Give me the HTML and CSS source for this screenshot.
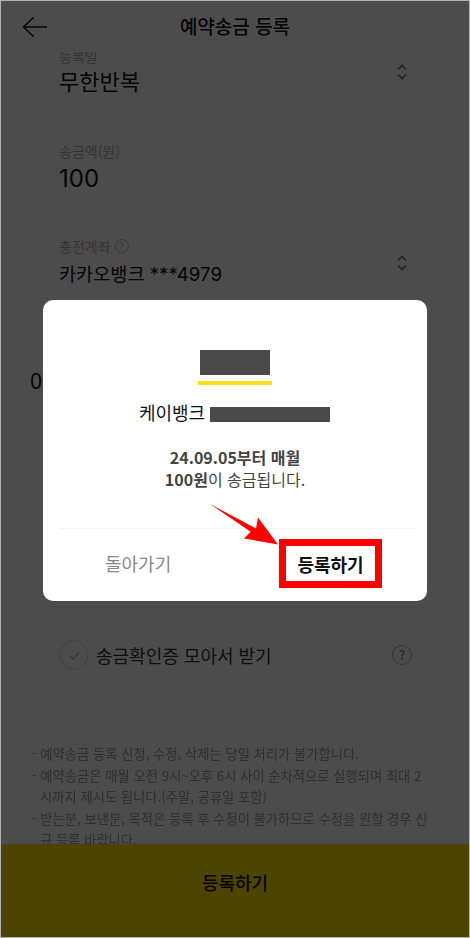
FILE: index.html
```html
<!DOCTYPE html>
<html lang="ko">
<head>
<meta charset="utf-8">
<title>예약송금 등록</title>
<link rel="stylesheet" href="styles.css">
</head>
<body>
<div class="screen">
  <header class="topbar">
    <svg class="back" viewBox="0 0 26 22" width="26" height="22"><path d="M25 11H1.5M11.5 1.5L1.5 11l10 9.5" fill="none" stroke="#111" stroke-width="1.5"/></svg>
    <h1 class="title">예약송금 등록</h1>
  </header>
  <main class="form">
    <section class="field first">
      <div class="field-text">
        <div class="label">등록일</div>
        <div class="value big">무한반복</div>
      </div>
      <svg class="updown" viewBox="0 0 10 16" width="10" height="16"><path d="M1 5.5L5 1.5l4 4M1 10.5l4 4 4-4" fill="none" stroke="#777" stroke-width="1.6"/></svg>
    </section>
    <section class="field amount">
      <div class="field-text">
        <div class="label">송금액(원)</div>
        <div class="value num">100</div>
      </div>
    </section>
    <section class="field account">
      <div class="field-text">
        <div class="label">충전계좌 <span class="hint">?</span></div>
        <div class="value mid">카카오뱅크 ***4979</div>
      </div>
      <svg class="updown" viewBox="0 0 10 16" width="10" height="16"><path d="M1 5.5L5 1.5l4 4M1 10.5l4 4 4-4" fill="none" stroke="#777" stroke-width="1.6"/></svg>
    </section>
    <div class="stray">0</div>
    <label class="check-row">
      <svg class="check" viewBox="0 0 30 30" width="30" height="30"><circle cx="15" cy="15" r="14" fill="none" stroke="#ddd" stroke-width="1.2"/><path d="M10 15.5l4 3.5 6-6.5" fill="none" stroke="#bbb" stroke-width="1.4"/></svg>
      <span class="check-text">송금확인증 모아서 받기</span>
      <span class="help">?</span>
    </label>
    <ul class="notes">
      <li>예약송금 등록 신청, 수정, 삭제는 당일 처리가 불가합니다.</li>
      <li>예약송금은 매월 오전 9시~오후 6시 사이 순차적으로 실행되며 최대 2<br>시까지 제시도 됩니다.(주말, 공휴일 포함)</li>
      <li>받는분, 보낸분, 목적은 등록 후 수정이 불가하므로 수정을 원할 경우 신<br>규 등록 바랍니다.</li>
    </ul>
  </main>
  <button class="submit" type="button">등록하기</button>

  <div class="dim"></div>

  <div class="modal">
    <div class="recipient"><span class="mask-name"></span></div>
    <div class="account-line">케이뱅크<span class="mask-account"></span></div>
    <p class="message"><strong>24.09.05부터 매월</strong><br><strong>100원</strong>이 송금됩니다.</p>
    <div class="actions">
      <button class="act cancel" type="button">돌아가기</button>
      <button class="act confirm" type="button">등록하기</button>
    </div>
    <svg class="pointer" viewBox="0 0 72 44" width="72" height="44"><polygon points="1,1 47,25.4 49,14.4 69,41.4 35,35.4 41.7,28.7" fill="#f00"/></svg>
  </div>
  <div class="frame"></div>
</div>
</body>
</html>
```
FILE: styles.css
```css
* { box-sizing: border-box; }
html, body { margin: 0; padding: 0; }
body { font-family: "Noto Sans CJK KR", "Noto Sans", sans-serif; }
.screen { position: relative; width: 470px; height: 938px; background: #fff; overflow: hidden; display: flex; flex-direction: column; color: #111; }
.topbar { height: 52px; flex: none; display: flex; align-items: center; justify-content: center; position: relative; background: #fff; z-index: 1; }
.back { position: absolute; left: 22px; top: 16px; }
.title { margin: 0; font-size: 19px; font-weight: 500; line-height: 54px; }
.form { flex: 1; min-height: 0; overflow: hidden; padding: 0 59px; position: relative; }
.field { display: flex; justify-content: space-between; align-items: flex-start; padding-right: 4px; }
.first { margin-top: -6px; }
.first .updown { margin-top: 18px; }
.amount { margin-top: 45px; }
.account { margin-top: 41px; }
.account .updown { margin-top: 19px; }
.label { font-size: 14px; line-height: 20px; color: #b0b0b0; display: flex; align-items: center; gap: 4px; }
.hint { width: 14px; height: 14px; border: 1px solid #bbb; border-radius: 50%; font-size: 10px; line-height: 12px; text-align: center; }
.value { color: #111; }
.big { font-size: 22px; line-height: 32px; margin-top: -2px; }
.num { font-size: 24px; line-height: 32px; font-family: "Inter", "Noto Sans", sans-serif; margin-top: 2px; }
.mid { font-size: 18.6px; line-height: 28px; margin-top: 4px; font-family: "Inter", "Noto Sans CJK KR", sans-serif; }
.stray { margin: 76px 0 0 -29px; font-size: 22px; line-height: 30px; height: 30px; color: #111; }
.check-row { display: flex; align-items: center; margin-top: 246px; }
.check { flex: none; }
.check-text { font-size: 18px; margin-left: 7px; color: #333; line-height: 30px; flex: 1; }
.help { width: 20px; height: 20px; margin-right: -1px; border: 1.5px solid #aaa; border-radius: 50%; color: #999; font-size: 13px; font-weight: 700; line-height: 17px; text-align: center; }
.notes { list-style: none; margin: 73px -27px 0; padding: 0; font-size: 13.3px; line-height: 21.6px; color: #a0a0a0; filter: blur(.5px); white-space: nowrap; }
.notes li { padding-left: 8px; text-indent: -8px; }
.notes li::before { content: "- "; }
.submit { flex: none; height: 94px; width: 100%; border: 0; background: #fee500; color: #111; font: 500 18px/1 "Noto Sans CJK KR", sans-serif; padding: 0 0 18px; }
.dim { position: absolute; inset: 0; background: rgba(0, 0, 0, .7); z-index: 2; }
.modal { position: absolute; left: 43px; top: 300px; width: 384px; height: 301px; background: #fff; border-radius: 10px; z-index: 3; display: flex; flex-direction: column; align-items: center; }
.recipient { margin-top: 50px; width: 74px; height: 35px; border-bottom: 4px solid #fde116; display: flex; justify-content: center; }
.mask-name { width: 70px; height: 25px; background: #4a4a4a; }
.account-line { margin-top: 14px; height: 26px; display: flex; align-items: center; font-size: 18px; color: #111; padding-right: 1px; }
.mask-account { width: 120px; height: 15px; background: #4a4a4a; margin-left: 5px; transform: translateY(2px); }
.message { margin: 21px 0 0; font-size: 16px; line-height: 22px; color: #444; text-align: center; }
.message strong { font-weight: 700; }
.actions { position: absolute; left: 17px; right: 12px; top: 228px; height: 61px; border-top: 1px solid #f3f3f3; }
.act { position: absolute; background: none; border: 0; padding: 0; font-family: inherit; font-size: 18px; line-height: 1; }
.cancel { left: 45px; top: 25px; color: #888; }
.confirm { left: 219px; top: 10px; width: 103px; height: 49px; border: 7px solid #f00; color: #111; font-weight: 700; }
.pointer { position: absolute; left: 166px; top: 203px; }
.frame { position: absolute; inset: 0; border: 1px solid #b5b5b5; z-index: 4; pointer-events: none; }
```
